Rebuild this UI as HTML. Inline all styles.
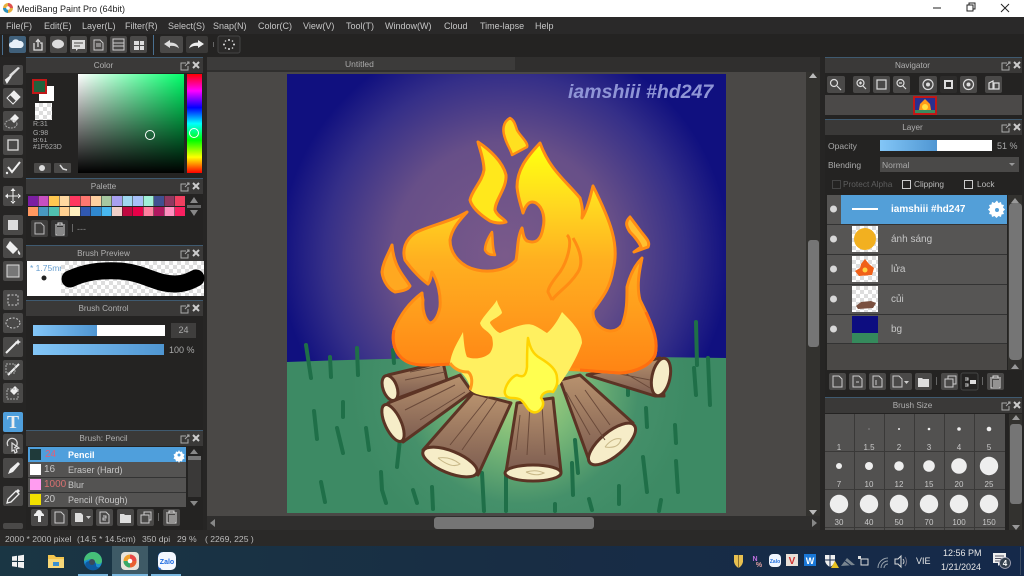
<!DOCTYPE html>
<html><head><meta charset="utf-8"><title>MediBang Paint Pro</title>
<style>
html,body{margin:0;padding:0;background:#262524;}
#r{position:relative;width:1024px;height:576px;overflow:hidden;background:#262524;font-family:"Liberation Sans","Noto Sans CJK JP",sans-serif;font-size:9px;color:#c6c6c6;filter:blur(.35px);}
.b{position:absolute;}
.t{position:absolute;white-space:nowrap;line-height:12px;}
.h{position:absolute;height:15px;background:#3a3938;border-top:1px solid #3f5a70;text-align:center;line-height:15px;font-size:8.2px;color:#b0b0b0;box-sizing:content-box;}
.l{padding-right:22px;width:155px;left:26px;}
.rp{padding-right:22px;width:175px;left:825px;}
.ck{background-color:#fff;background-image:linear-gradient(45deg,#ddd 25%,transparent 25%,transparent 75%,#ddd 75%),linear-gradient(45deg,#ddd 25%,transparent 25%,transparent 75%,#ddd 75%);background-size:8px 8px;background-position:0 0,4px 4px;}
svg{position:absolute;left:0;top:0;}
</style></head><body><div id="r">

<div class="b" style="left:0;top:0;width:1024px;height:17px;background:#fff"></div>
<div class="t" style="left:17px;top:3px;color:#222;font-size:9px">MediBang Paint Pro (64bit)</div>

<div class="b" style="left:0;top:17px;width:1024px;height:17px;background:#2a2929"></div>
<div class="t" style="left:6px;top:20px">File(F)</div><div class="t" style="left:44px;top:20px">Edit(E)</div><div class="t" style="left:82px;top:20px">Layer(L)</div><div class="t" style="left:125px;top:20px">Filter(R)</div><div class="t" style="left:168px;top:20px">Select(S)</div><div class="t" style="left:213px;top:20px">Snap(N)</div><div class="t" style="left:258px;top:20px">Color(C)</div><div class="t" style="left:303px;top:20px">View(V)</div><div class="t" style="left:346px;top:20px">Tool(T)</div><div class="t" style="left:385px;top:20px">Window(W)</div><div class="t" style="left:444px;top:20px">Cloud</div><div class="t" style="left:480px;top:20px">Time-lapse</div><div class="t" style="left:535px;top:20px">Help</div>

<div class="b" style="left:0;top:34px;width:1024px;height:23px;background:#242322"></div>

<!-- centre -->
<div class="b" style="left:207px;top:57px;width:613px;height:16px;background:#302f2e"></div>
<div class="b" style="left:207px;top:57px;width:308px;height:13px;background:#3c3b3a"></div>
<div class="t" style="left:345px;top:58px;font-size:8.500px;color:#aaa">Untitled</div>
<div class="b" style="left:207px;top:72px;width:599px;height:444px;background:#4a4846"></div>
<div class="b" style="left:806px;top:72px;width:14px;height:444px;background:#33322f"></div>
<div class="b" style="left:808px;top:240px;width:11px;height:107px;background:#757575;border-radius:3px"></div>
<div class="b" style="left:207px;top:516px;width:613px;height:14px;background:#2f2e2d"></div>
<div class="b" style="left:434px;top:517px;width:160px;height:12px;background:#757575;border-radius:3px"></div>

<!-- panel columns -->
<div class="b" style="left:26px;top:57px;width:177px;height:473px;background:#242322"></div>
<div class="h l" style="top:57px">Color</div>
<div class="b" style="left:78px;top:74px;width:106px;height:99px;background:linear-gradient(to top,#000,rgba(0,0,0,0)),linear-gradient(to right,#fff,#00ff6a)"></div>
<div class="b" style="left:187px;top:74px;width:15px;height:99px;background:linear-gradient(to bottom,#f00,#f0f 17%,#00f 34%,#0ff 50%,#0f0 67%,#ff0 84%,#f00)"></div>
<div class="b" style="left:39px;top:86px;width:15px;height:15px;background:#fff"></div>
<div class="b" style="left:32px;top:79px;width:11px;height:11px;background:#1f623d;border:2px solid #c01818"></div>
<div class="b ck" style="left:35px;top:103px;width:17px;height:17px"></div>
<div class="t" style="left:33px;top:120px;font-size:7px;line-height:9px;color:#aaa">R:31<br>G:98<br><span style="display:block;height:5px;overflow:hidden;line-height:5px">B:61</span>#1F623D</div>

<div class="h l" style="top:178px">Palette</div>
<div class="h l" style="top:245px">Brush Preview</div>
<div class="b" style="left:27px;top:261px;width:34px;height:35px;background:#fff"></div>
<div class="b ck" style="left:61px;top:261px;width:143px;height:35px"></div>
<div class="t" style="left:30px;top:262px;font-size:8.500px;color:#6aa0d0;width:31px;overflow:hidden">* 1.75mm</div>
<div class="h l" style="top:300px">Brush Control</div>
<div class="b" style="left:33px;top:325px;width:132px;height:11px;background:#fff"></div>
<div class="b" style="left:33px;top:325px;width:64px;height:11px;background:linear-gradient(to right,#83c6f7,#4f96d2)"></div>
<div class="b" style="left:171px;top:323px;width:25px;height:15px;background:#3f3e3d;text-align:center;line-height:15px;color:#aaa;font-size:9px">24</div>
<div class="b" style="left:33px;top:344px;width:131px;height:11px;background:linear-gradient(to right,#83c6f7,#4f96d2)"></div>
<div class="t" style="left:169px;top:344px;font-size:9px;color:#aaa">100 %</div>
<div class="h l" style="top:430px">Brush: Pencil</div>
<div class="b" style="left:28px;top:447px;width:158px;height:60px;background:#545352"></div>
<div class="b" style="left:28px;top:447px;width:158px;height:15px;background:#4f9fdc"></div>
<div class="b" style="left:28px;top:477px;width:158px;height:1px;background:#333"></div>
<div class="b" style="left:28px;top:492px;width:158px;height:1px;background:#333"></div>
<div class="b" style="left:30px;top:449px;width:11px;height:11px;background:#1f3a3a"></div>
<div class="b" style="left:30px;top:464px;width:11px;height:11px;background:#fff"></div>
<div class="b" style="left:30px;top:479px;width:11px;height:11px;background:#ff9cf0"></div>
<div class="b" style="left:30px;top:494px;width:11px;height:11px;background:#f0e000"></div>
<div class="t" style="left:45px;top:449px;color:#e0607a;font-size:10px">24</div><div class="t" style="left:68px;top:449px;color:#fff;font-weight:bold">Pencil</div>
<div class="t" style="left:44px;top:464px;font-size:10px">16</div><div class="t" style="left:68px;top:464px">Eraser (Hard)</div>
<div class="t" style="left:44px;top:479px;color:#d97070;font-size:10px">1000</div><div class="t" style="left:68px;top:479px">Blur</div>
<div class="t" style="left:44px;top:494px;font-size:10px">20</div><div class="t" style="left:68px;top:494px">Pencil (Rough)</div>
<div class="b" style="left:188px;top:457px;width:13px;height:40px;background:#3a3938"></div>
<div class="b" style="left:188px;top:456px;width:13px;height:4px;background:#777"></div>

<div class="b" style="left:825px;top:57px;width:197px;height:473px;background:#242322"></div>
<div class="h rp" style="top:57px">Navigator</div>
<div class="b" style="left:825px;top:95px;width:197px;height:20px;background:#4b4948"></div>
<div class="h rp" style="top:119px">Layer</div>
<div class="t" style="left:828px;top:140px;font-size:8.500px;color:#aaa">Opacity</div>
<div class="b" style="left:880px;top:140px;width:112px;height:11px;background:#fff"></div>
<div class="b" style="left:880px;top:140px;width:57px;height:11px;background:linear-gradient(to right,#83c6f7,#4f96d2)"></div>
<div class="t" style="left:997px;top:140px;font-size:9px;color:#aaa">51 %</div>
<div class="t" style="left:828px;top:159px;font-size:8.500px;color:#aaa">Blending</div>
<div class="b" style="left:880px;top:157px;width:139px;height:15px;background:#4a4948"></div>
<div class="t" style="left:882px;top:159px;font-size:8.500px;color:#aaa">Normal</div>
<div class="t" style="left:843px;top:178px;font-size:8.300px;color:#5e5e5e">Protect Alpha</div>
<div class="t" style="left:914px;top:178px;font-size:8.300px;color:#bbb">Clipping</div>
<div class="t" style="left:977px;top:178px;font-size:8.300px;color:#bbb">Lock</div>
<div class="b" style="left:827px;top:195px;width:180px;height:175px;background:#4a4846"></div>
<div class="b" style="left:827px;top:195px;width:180px;height:149px;background:#565554"></div>
<div class="b" style="left:841px;top:195px;width:166px;height:29px;background:#539fd8"></div>
<div class="b" style="left:827px;top:224px;width:180px;height:1px;background:#333"></div>
<div class="b" style="left:827px;top:254px;width:180px;height:1px;background:#333"></div>
<div class="b" style="left:827px;top:284px;width:180px;height:1px;background:#333"></div>
<div class="b" style="left:827px;top:314px;width:180px;height:1px;background:#333"></div>
<div class="b" style="left:827px;top:343px;width:180px;height:1px;background:#333"></div>
<div class="t" style="left:891px;top:204px;color:#fff;font-weight:bold;font-size:10px">iamshiii #hd247</div>
<div class="t" style="left:891px;top:234px;font-size:10px">ánh sáng</div>
<div class="t" style="left:891px;top:264px;font-size:10px">lửa</div>
<div class="t" style="left:891px;top:294px;font-size:10px">củi</div>
<div class="t" style="left:891px;top:324px;font-size:10px">bg</div>
<div class="b ck" style="left:852px;top:226px;width:26px;height:26px"></div>
<div class="b ck" style="left:852px;top:256px;width:26px;height:26px"></div>
<div class="b ck" style="left:852px;top:286px;width:26px;height:26px"></div>
<div class="b" style="left:852px;top:316px;width:26px;height:17px;background:#0d0d80"></div>
<div class="b" style="left:852px;top:333px;width:26px;height:10px;background:#358a5c"></div>
<div class="b" style="left:1008px;top:195px;width:14px;height:175px;background:#33322f"></div>
<div class="b" style="left:1009px;top:203px;width:13px;height:157px;background:#757575;border-radius:4px"></div>
<div class="h rp" style="top:397px">Brush Size</div>
<div class="b" style="left:825px;top:414px;width:180px;height:116px;background:#525150"></div>
<div class="b" style="left:1009px;top:414px;width:13px;height:116px;background:#33322f"></div>
<div class="b" style="left:1010px;top:424px;width:12px;height:80px;background:#757575;border-radius:3px"></div>
<div class="b" style="left:825px;top:451px;width:180px;height:1px;background:#3a3938"></div>
<div class="b" style="left:825px;top:489px;width:180px;height:1px;background:#3a3938"></div>
<div class="b" style="left:825px;top:527px;width:180px;height:1px;background:#3a3938"></div>
<div class="b" style="left:854px;top:414px;width:1px;height:116px;background:#3a3938"></div>
<div class="b" style="left:884px;top:414px;width:1px;height:116px;background:#3a3938"></div>
<div class="b" style="left:914px;top:414px;width:1px;height:116px;background:#3a3938"></div>
<div class="b" style="left:944px;top:414px;width:1px;height:116px;background:#3a3938"></div>
<div class="b" style="left:974px;top:414px;width:1px;height:116px;background:#3a3938"></div>

<!-- status / taskbar -->
<div class="b" style="left:0;top:530px;width:1024px;height:16px;background:#2a2928"></div>
<div class="t" style="left:5px;top:533px;color:#bbb;font-size:8.600px">2000 * 2000 pixel</div>
<div class="t" style="left:77px;top:533px;color:#bbb;font-size:8.600px">(14.5 * 14.5cm)</div>
<div class="t" style="left:142px;top:533px;color:#bbb;font-size:8.600px">350 dpi</div>
<div class="t" style="left:177px;top:533px;color:#bbb;font-size:8.600px">29 %</div>
<div class="t" style="left:205px;top:533px;color:#bbb;font-size:8.600px">( 2269, 225 )</div>
<div class="b" style="left:0;top:546px;width:1024px;height:30px;background:linear-gradient(to right,#1a3644,#182d44 50%,#15294a)"></div>
<div class="b" style="left:112px;top:546px;width:36px;height:30px;background:#3e5a66"></div>
<div class="b" style="left:78px;top:574px;width:30px;height:2px;background:#7ab8e0"></div>
<div class="b" style="left:112px;top:574px;width:36px;height:2px;background:#7ab8e0"></div>
<div class="b" style="left:151px;top:574px;width:30px;height:2px;background:#7ab8e0"></div>
<div class="t" style="left:916px;top:555px;color:#e6e6e6;font-size:9px">VIE</div>
<div class="t" style="left:943px;top:547px;color:#e6e6e6;font-size:9px">12:56 PM</div>
<div class="t" style="left:941px;top:561px;color:#e6e6e6;font-size:9px">1/21/2024</div>

<!-- artwork + icons overlay -->
<svg width="1024" height="576" viewBox="0 0 1024 576">
<defs>
<radialGradient id="sky" gradientUnits="userSpaceOnUse" cx="505" cy="255" r="225"><stop offset="0" stop-color="#7a5a8a"/><stop offset=".5" stop-color="#674f88"/><stop offset=".8" stop-color="#352f88"/><stop offset="1" stop-color="#10107f"/></radialGradient>
<radialGradient id="gr" gradientUnits="userSpaceOnUse" cx="520" cy="385" r="170"><stop offset="0" stop-color="#b8d880"/><stop offset=".35" stop-color="#7cba78"/><stop offset=".7" stop-color="#45906a"/><stop offset="1" stop-color="#3d8a64"/></radialGradient>
<linearGradient id="fl" gradientUnits="userSpaceOnUse" x1="0" y1="150" x2="0" y2="370"><stop offset="0" stop-color="#ffff10"/><stop offset=".25" stop-color="#ffd820"/><stop offset=".5" stop-color="#ffb020"/><stop offset=".75" stop-color="#ff9c1c"/><stop offset="1" stop-color="#ff8514"/></linearGradient>
<linearGradient id="lg" x1="0" y1="0" x2="0" y2="1"><stop offset="0" stop-color="#b8926e"/><stop offset="1" stop-color="#7c5c50"/></linearGradient>
<g id="x"><path d="M0 0l6 6M6 0l-6 6" stroke="#ccc" stroke-width="2"/></g>
<g id="f"><path d="M5 2H0v7h7V5M4 5l4-4M6 1h2v2" stroke="#aaa" fill="none"/></g>
</defs>

<!-- canvas -->
<rect x="287" y="74" width="439" height="439" fill="url(#sky)"/>
<path d="M287 362Q500 354 726 358V513H287Z" fill="url(#gr)"/>
<g stroke="#1f6f48" stroke-width="4" stroke-linecap="round" fill="none">
<path d="M306 345L311 378M330 357L331 377M357 348L358 375M343 402V417M314 411L317 439M337 428L343 453M366 428L369 450M381 472L382 490L386 503M321 482L325 502M401 430L397 467M413 490L417 503M432 487L433 509M482 473L484 511M506 473V511M555 504V511M572 463L573 495M575 440L578 473M589 499L592 510M619 486V504M643 457L647 492M646 408L647 427M675 425L676 443M676 461L678 492M661 500L659 511M628 389V395M393 350L394 363M696 322L697 365M708 358L710 405M694 368L696 395"/>
</g>
<!-- back logs -->
<g stroke="#5c3425" stroke-width="3" stroke-linejoin="round">
<path d="M587 375L660 358L664 396L655 396Z" fill="url(#lg)"/>
<ellipse cx="661" cy="377" rx="9" ry="19" transform="rotate(12 661 377)" fill="#f6edc8"/>
<path d="M443 362L388 375L398 398L447 380Z" fill="url(#lg)"/>
<ellipse cx="390" cy="388" rx="7" ry="13" transform="rotate(-20 390 388)" fill="#f6edc8"/>
<path d="M460 375L388 403L403 442L472 392Z" fill="url(#lg)"/>
<ellipse cx="393" cy="423" rx="8" ry="20" transform="rotate(-25 393 423)" fill="#f6edc8"/>
<path d="M473 393L511 403L478 475L423 450Z" fill="url(#lg)"/>
<ellipse cx="450" cy="462" rx="29" ry="11" transform="rotate(22 450 462)" fill="#f6edc8"/>
<path d="M517 403L553 398L561 472L506 472Z" fill="url(#lg)"/>
<ellipse cx="533" cy="473" rx="28" ry="8" fill="#f6edc8"/>
<path d="M560 380L580 375L633 423L590 463Z" fill="url(#lg)"/>
<ellipse cx="612" cy="444" rx="29" ry="12" transform="rotate(-40 612 444)" fill="#f6edc8"/>
</g>
<g stroke="#6a4a3a" stroke-width="1" fill="none">
<path d="M410 372L440 366M405 380L445 372M405 410L455 385M420 420L465 392M450 445L490 395M462 450L497 400M530 405L527 455M542 405L545 455M520 415L516 450M575 395L605 440M585 390L610 425M566 392L590 435M610 372L650 380M625 373L650 388"/>
<path d="M438 458q12-2 22 6q-8 5-22-6M526 472q10-3 18 1q-8 4-18-1M605 447q8-10 16-8q-2 10-16 8" stroke="#c8b888"/>
</g>
<!-- flame -->
<g stroke="#ff8c14" stroke-width="3" stroke-linejoin="round">
<path d="M540 143C526 158 517 170 517 187C518 198 521 205 523 213C526 204 530 200 536 203C544 208 545 220 543 228C541 240 536 244 527 241C523 238 523 232 522 228C517 238 518 250 516 260C508 270 490 273 477 270C462 267 450 255 450 240C452 228 460 220 467 212C450 222 428 226 415 233C405 240 402 250 405 260C412 270 422 280 428 284C431 280 431 275 432 272C438 282 441 295 440 307C438 318 433 323 430 323C425 320 422 310 423 300C422 296 422 293 422 293C410 302 400 315 394 330C391 345 397 358 410 363C420 366 430 365 450 364L580 370L620 373C635 372 650 366 655 355C659 340 650 320 640 300C636 285 640 268 642 258C635 265 630 275 627 287C627 300 627 312 622 325C615 334 605 332 598 325C592 318 592 310 595 308C600 300 610 290 613 270C620 245 610 220 593 186C590 198 587 210 582 218C583 210 582 205 580 198C565 180 550 170 540 143Z" fill="url(#fl)"/>
<path d="M510 118C503 122 502 130 505 138C507 145 511 150 512 155L527 147C529 143 520 136 517 130C515 124 514 120 510 118Z" fill="#ffe020" stroke-width="2.500"/>
<path d="M478 142C490 150 503 162 506 175C507 188 495 200 495 210C497 216 503 218 506 222C500 224 495 223 490 221C482 216 472 208 470 200C472 190 482 182 484 170C484 160 480 150 478 142Z" fill="#ffe81c"/>
<path d="M492 232C488 238 485 244 485 250C487 254 490 255 495 255C492 248 493 240 492 232Z" fill="#ffb020" stroke-width="2.500"/>
<path d="M392 245C388 255 383 262 382 272C383 282 390 290 395 292C402 291 408 290 410 286C404 276 394 268 392 245Z" fill="#ffa820"/>
<path d="M630 217C625 222 626 226 630 232C636 238 640 244 641 247L634 252L648 247C650 243 648 240 642 233Z" fill="#ffc030"/>
<path d="M567 235C573 240 568 260 560 272C552 282 548 288 548 292L552 300M573 238C580 250 584 262 578 272C570 285 558 292 552 300" fill="none"/>
</g>
<path d="M394 330C391 345 397 358 410 363C420 366 430 365 450 364M580 370L620 373C635 372 650 366 655 355C659 340 652 326 646 312" fill="none" stroke="#ff6e10" stroke-width="3"/>
<!-- inner yellow -->
<path d="M497 300C497 304 502 310 502 313C498 318 490 320 490 323C493 328 497 332 500 333C512 328 525 322 533 325C540 328 545 332 547 333C553 328 558 320 562 312C572 322 582 332 582 343C578 355 572 365 568 372L560 384C540 395 520 398 503 397C485 397 475 395 470 390C470 380 462 372 450 363C452 350 458 342 463 332C464 345 465 352 467 357C475 360 485 358 490 353C494 347 493 342 492 337C488 330 482 330 480 323C484 315 492 308 497 300Z" fill="#fff060"/>
<path d="M450 363C455 370 462 372 468 372C472 375 473 382 470 390" fill="none" stroke="#ff9a1c" stroke-width="3"/>
<path d="M528 338C530 348 533 354 540 358C550 364 557 370 557 378C558 384 556 388 553 392C548 390 542 393 541 398C544 402 544 406 540 410C536 414 530 413 526 406C522 400 520 398 512 398C506 398 504 394 505 390C507 382 513 376 517 375C523 378 526 376 527 367C527 355 527 348 528 338Z" fill="#ffff50" stroke="#ffd400" stroke-width="2.500" stroke-linejoin="round"/>
<text x="568" y="98" font-family="Liberation Sans" font-weight="bold" font-style="italic" font-size="19.500" fill="#8f95d6">iamshiii #hd247</text>

<!-- toolbar -->
<g fill="#4a4948">
<rect x="29" y="36" width="17" height="17" rx="2"/><rect x="50" y="36" width="17" height="17" rx="2"/><rect x="70" y="36" width="17" height="17" rx="2"/><rect x="90" y="36" width="17" height="17" rx="2"/><rect x="110" y="36" width="17" height="17" rx="2"/><rect x="130" y="36" width="17" height="17" rx="2"/><rect x="160" y="36" width="23" height="17" rx="2"/>
<rect x="186" y="36" width="22" height="17" rx="2" fill="#3a3938"/></g>
<rect x="9" y="36" width="17" height="17" rx="2" fill="#40607a"/>
<rect x="218" y="36" width="22" height="17" rx="2" fill="#2a2928" stroke="#444"/>
<rect x="2" y="35" width="1" height="20" fill="#4a7090"/><rect x="153" y="35" width="1" height="20" fill="#4a7090"/><rect x="213" y="42" width="1" height="5" fill="#666"/>
<path d="M12 48a3 3 0 0 1 0-6a4 4 0 0 1 7-1a3.500 3.500 0 0 1 2 7Z" fill="#e8f0f8"/>
<path d="M34 43v7h8v-7h-2M38 47v-7M36 42l2-2.500l2 2.500" fill="none" stroke="#ddd" stroke-width="1.300"/>
<ellipse cx="58" cy="44" rx="6" ry="4.500" fill="#ddd"/>
<path d="M72 40h13v9h-7l-2 2v-2h-4Z" fill="#ddd"/><path d="M74 43h9M74 46h6" stroke="#4a4948"/>
<path d="M94 40h6l3 3v7h-9Z" fill="none" stroke="#ccc"/><path d="M96 44h5M96 46h5" stroke="#ccc"/>
<rect x="113" y="39" width="11" height="11" fill="none" stroke="#ccc"/><path d="M113 43h11M113 46h11" stroke="#ccc"/>
<path d="M134 41h5v4h-5ZM140 41h4v4h-4ZM134 46h5v4h-5ZM140 46h4v4h-4Z" fill="#ddd"/>
<path d="M164 44l6-4v2.500c5 0 8 2 9 6c-2-2-5-3-9-2.500V48Z" fill="#ddd"/>
<path d="M204 44l-6-4v2.500c-5 0-8 2-9 6c2-2 5-3 9-2.500V48Z" fill="#eee"/>
<g fill="#ddd"><circle cx="229" cy="40" r="1"/><circle cx="229" cy="49" r="1"/><circle cx="224" cy="44.500" r="1"/><circle cx="234" cy="44.500" r="1"/><circle cx="225.500" cy="41" r=".8"/><circle cx="232.500" cy="41" r=".8"/><circle cx="225.500" cy="48" r=".8"/><circle cx="232.500" cy="48" r=".8"/></g>

<!-- tool column -->
<g fill="#4a4948">
<rect x="3" y="65" width="20" height="20" rx="2"/><rect x="3" y="88" width="20" height="20" rx="2"/><rect x="3" y="111" width="20" height="20" rx="2"/><rect x="3" y="135" width="20" height="20" rx="2"/><rect x="3" y="158" width="20" height="20" rx="2"/><rect x="3" y="186" width="20" height="20" rx="2"/><rect x="3" y="215" width="20" height="20" rx="2"/><rect x="3" y="238" width="20" height="20" rx="2"/><rect x="3" y="261" width="20" height="20" rx="2"/><rect x="3" y="290" width="20" height="20" rx="2"/><rect x="3" y="313" width="20" height="20" rx="2"/><rect x="3" y="337" width="20" height="20" rx="2"/><rect x="3" y="360" width="20" height="20" rx="2"/><rect x="3" y="383" width="20" height="20" rx="2"/><rect x="3" y="434" width="20" height="20" rx="2"/><rect x="3" y="458" width="20" height="20" rx="2"/><rect x="3" y="486" width="20" height="20" rx="2"/><rect x="3" y="523" width="20" height="6" rx="2"/>
</g>
<rect x="3" y="412" width="20" height="20" rx="2" fill="#4f9fdc"/>
<path d="M20 68L11 77L9 75L18 67Z" fill="#ddd"/><path d="M11 76L7 82L6 80Z" fill="#eee" stroke="#eee" stroke-width="2"/>
<path d="M14 91l6 6l-7 7l-6-6Z" fill="#eee"/><path d="M10 95l6 6l-3 3l-6-6Z" fill="#4a4948"/><path d="M14 91l6 6l-7 7l-6-6Z" fill="none" stroke="#eee"/>
<path d="M15 114l4 4l-5 5l-4-4Z" fill="#eee"/><ellipse cx="11" cy="124" rx="6" ry="4" fill="none" stroke="#aaa" stroke-dasharray="2 1"/>
<rect x="8" y="140" width="10" height="10" fill="none" stroke="#ddd" stroke-width="1.300"/>
<path d="M20 162L12 172L8 167" fill="none" stroke="#eee" stroke-width="2"/><circle cx="7" cy="173" r="1.200" fill="#eee"/>
<path d="M13 188l2.500 3h-5ZM13 204l2.500-3h-5ZM5 196l3-2.500v5ZM21 196l-3-2.500v5ZM7 195.500h12v1H7ZM12.500 190h1v12h-1Z" fill="#eee"/>
<rect x="8" y="220" width="10" height="10" fill="#ddd"/>
<path d="M10 241l8 8l-5 5l-7-7ZM18 250q3 3 2 5q-3-1-2-5" fill="#eee"/>
<rect x="7" y="265" width="12" height="12" fill="#777" stroke="#ddd"/>
<rect x="8" y="295" width="10" height="10" fill="none" stroke="#ccc" stroke-dasharray="2 1.500"/>
<ellipse cx="13" cy="323" rx="7" ry="5" fill="none" stroke="#ccc" stroke-dasharray="2 1.500"/>
<path d="M6 353L17 342" stroke="#eee" stroke-width="2"/><path d="M18 339l1 2l2 1l-2 1l-1 2l-1-2l-2-1l2-1Z" fill="#eee"/>
<path d="M8 375L19 364" stroke="#eee" stroke-width="2"/><rect x="6" y="364" width="9" height="9" fill="none" stroke="#aaa" stroke-dasharray="2 1"/>
<path d="M15 386l4 4l-5 5l-4-4Z" fill="#eee"/><rect x="7" y="389" width="11" height="10" fill="none" stroke="#aaa" stroke-dasharray="2 1"/>
<text x="13" y="428" text-anchor="middle" font-family="Liberation Serif" font-weight="bold" font-size="18" fill="#eee">T</text>
<path d="M8 446a5 5 0 1 1 6 2M12 443l7 5l-3 1l1 3l-2 1l-1-3l-2 1Z" fill="none" stroke="#ddd" stroke-width="1.200"/>
<path d="M8 474l2-5l8-7l2 2l-7 8Z" fill="#eee"/>
<path d="M7 503l1-4l8-8l3 3l-8 8Z" fill="none" stroke="#eee" stroke-width="1.300"/><path d="M16 491l2-2l2 2l-2 2Z" fill="#eee"/>

<!-- colour panel bits -->
<circle cx="150" cy="135" r="4.500" fill="none" stroke="#fff" stroke-width="1"/>
<circle cx="194" cy="133" r="4.500" fill="none" stroke="#fff" stroke-width="1"/>
<rect x="34" y="163" width="17" height="10" rx="1" fill="#4a4948"/><rect x="54" y="163" width="17" height="10" rx="1" fill="#4a4948"/>
<circle cx="42" cy="168" r="3" fill="#ddd"/><path d="M60 165l3 4l4 1" stroke="#ddd" stroke-width="1.500" fill="none"/>
<use href="#f" x="181" y="61"/><use href="#x" x="193" y="62"/>
<use href="#f" x="181" y="182"/><use href="#x" x="193" y="183"/>
<use href="#f" x="181" y="249"/><use href="#x" x="193" y="250"/>
<use href="#f" x="181" y="304"/><use href="#x" x="193" y="305"/>
<use href="#f" x="181" y="434"/><use href="#x" x="193" y="435"/>
<use href="#f" x="1002" y="61"/><use href="#x" x="1014" y="62"/>
<use href="#f" x="1002" y="123"/><use href="#x" x="1014" y="124"/>
<use href="#f" x="1002" y="401"/><use href="#x" x="1014" y="402"/>

<!-- palette -->
<g>
<rect x="28" y="196" width="10" height="10" fill="#7b1fa2"/><rect x="38.500" y="196" width="10" height="10" fill="#c850c0"/><rect x="49" y="196" width="10" height="10" fill="#ffc850"/><rect x="59.500" y="196" width="10" height="10" fill="#ffd8a0"/><rect x="70" y="196" width="10" height="10" fill="#ff3860"/><rect x="80.500" y="196" width="10" height="10" fill="#ff7870"/><rect x="91" y="196" width="10" height="10" fill="#ffd0a0"/><rect x="101.500" y="196" width="10" height="10" fill="#a8c8a0"/><rect x="112" y="196" width="10" height="10" fill="#a8a0f0"/><rect x="122.500" y="196" width="10" height="10" fill="#a0d8f0"/><rect x="133" y="196" width="10" height="10" fill="#a8c0f8"/><rect x="143.500" y="196" width="10" height="10" fill="#a0f0d8"/><rect x="154" y="196" width="10" height="10" fill="#405090"/><rect x="164.500" y="196" width="10" height="10" fill="#903860"/><rect x="175" y="196" width="10" height="10" fill="#f04060"/>
<rect x="28" y="207" width="10" height="9" fill="#ff9860"/><rect x="38.500" y="207" width="10" height="9" fill="#4898c0"/><rect x="49" y="207" width="10" height="9" fill="#50c0b0"/><rect x="59.500" y="207" width="10" height="9" fill="#ffd090"/><rect x="70" y="207" width="10" height="9" fill="#fff0c0"/><rect x="80.500" y="207" width="10" height="9" fill="#3058b0"/><rect x="91" y="207" width="10" height="9" fill="#3088d0"/><rect x="101.500" y="207" width="10" height="9" fill="#48b8f0"/><rect x="112" y="207" width="10" height="9" fill="#f0d0c8"/><rect x="122.500" y="207" width="10" height="9" fill="#c00840"/><rect x="133" y="207" width="10" height="9" fill="#e80048"/><rect x="143.500" y="207" width="10" height="9" fill="#ff80a0"/><rect x="154" y="207" width="10" height="9" fill="#b01860"/><rect x="164.500" y="207" width="10" height="9" fill="#ff90c0"/><rect x="175" y="207" width="10" height="9" fill="#f82060"/>
</g>
<path d="M194 197l4 6h-8ZM194 216l4-6h-8Z" fill="#888"/><rect x="187" y="205" width="14" height="3" fill="#666"/>
<rect x="31" y="220" width="17" height="17" rx="2" fill="#3f3e3d"/><rect x="51" y="220" width="17" height="17" rx="2" fill="#333"/>
<path d="M35 223h6l3 3v8h-9Z" fill="none" stroke="#bbb"/>
<path d="M55 225h10M56 226v9h8v-9M58 227v7M60 227v7M62 227v7M58 225v-2h4v2" fill="none" stroke="#ddd"/>
<rect x="72" y="224" width="1" height="8" fill="#666"/><text x="77" y="232" font-size="9" fill="#888" font-family="Liberation Sans">---</text>

<!-- brush preview -->
<circle cx="44" cy="278" r="2.500" fill="#222"/>
<path d="M70 279C85 272 100 270 120 271C145 273 155 284 175 284C185 284 192 280 196 278" fill="none" stroke="#000" stroke-width="17" stroke-linecap="round"/>

<!-- brush list icons -->
<path d="M179 450l1 2l2-.5l.5 2l2 1l-1 2l1 2l-2 1l-.5 2l-2-.5l-1 2l-1-2l-2 .5l-.5-2l-2-1l1-2l-1-2l2-1l.5-2l2 .5Z" fill="#fff"/><circle cx="179" cy="455" r="1.500" fill="#4f9fdc"/>
<path d="M194 449l4 5h-8ZM194 506l4-5h-8Z" fill="#888"/>
<g fill="#4a4948"><rect x="31" y="509" width="17" height="17" rx="2"/><rect x="51" y="509" width="17" height="17" rx="2"/><rect x="71" y="509" width="22" height="17" rx="2"/><rect x="96" y="509" width="17" height="17" rx="2"/><rect x="117" y="509" width="17" height="17" rx="2"/><rect x="137" y="509" width="17" height="17" rx="2"/><rect x="163" y="509" width="17" height="17" rx="2"/></g>
<path d="M34 516a2.500 2.500 0 0 1 2-3a3 3 0 0 1 6 0a2.500 2.500 0 0 1 2 3h-3v6h-3v-6Z" fill="#eee"/>
<path d="M55 512h6l3 3v8h-9Z" fill="none" stroke="#ccc"/>
<path d="M75 513h6l2 2v7h-8Z" fill="#ddd"/><path d="M86 516h5l-2.500 3Z" fill="#ccc"/>
<path d="M100 512h6l3 3v8h-9Z" fill="none" stroke="#ccc"/><path d="M103 516h3v2h-3v2h3" stroke="#ccc" fill="none"/>
<path d="M120 514h4l1 1h6v8h-11Z" fill="#ddd"/>
<path d="M141 515h8v8h-8ZM144 515v-3h7v8h-2" fill="none" stroke="#ccc"/>
<rect x="158" y="513" width="1" height="8" fill="#666"/>
<path d="M166 513h11M167 514v9h9v-9M170 515v7M172 515v7M174 515v7M169 513v-2h5v2" fill="none" stroke="#ddd"/>

<!-- navigator -->
<g fill="#4a4948"><rect x="827" y="76" width="18" height="17" rx="2"/><rect x="853" y="76" width="17" height="17" rx="2"/><rect x="873" y="76" width="17" height="17" rx="2"/><rect x="893" y="76" width="17" height="17" rx="2"/><rect x="919" y="76" width="18" height="17" rx="2"/><rect x="960" y="76" width="17" height="17" rx="2"/><rect x="985" y="76" width="17" height="17" rx="2"/></g>
<rect x="940" y="76" width="17" height="17" rx="2" fill="#2e2d2c"/>
<g fill="none" stroke="#ddd" stroke-width="1.200">
<circle cx="834" cy="83" r="3.500"/><path d="M837 86l4 4M863 86l3 3M903 86l3 3"/><circle cx="860.500" cy="83" r="3.500"/><path d="M859 83h3M860.500 81.500v3"/><rect x="877" y="80" width="9" height="9"/><circle cx="900.500" cy="83" r="3.500"/><path d="M899 83h3"/>
<circle cx="928" cy="84.500" r="5"/><path d="M945 81h7v7h-7Z" stroke-width="2"/><circle cx="968.500" cy="84.500" r="5"/>
<path d="M989 89v-6l4-2v8ZM994 83h5v6h-5Z"/></g>
<circle cx="928" cy="84.500" r="2" fill="#ddd"/><circle cx="968.500" cy="84.500" r="2" fill="#ddd"/>
<g><rect x="913" y="96" width="24" height="19" fill="#c01818"/><rect x="915" y="98" width="20" height="15" fill="#2a2f90"/><rect x="915" y="110" width="20" height="3" fill="#3c8a60"/><path d="M925 99l5 5l1 6h-12l1-6Z" fill="#ff9a18"/><circle cx="925" cy="107" r="3" fill="#ffe040"/></g>

<!-- layer controls -->
<path d="M1009 163h6l-3 3Z" fill="#999"/>
<rect x="832.500" y="180.500" width="8" height="8" fill="none" stroke="#444"/><rect x="902.500" y="180.500" width="8" height="8" fill="none" stroke="#ccc"/><rect x="964.500" y="180.500" width="8" height="8" fill="none" stroke="#ccc"/>
<g fill="#d8d8d8"><circle cx="833.500" cy="209" r="3.500"/><circle cx="833.500" cy="239" r="3.500"/><circle cx="833.500" cy="269" r="3.500"/><circle cx="833.500" cy="299" r="3.500"/><circle cx="833.500" cy="329" r="3.500"/></g>
<rect x="852" y="208" width="26" height="2" fill="#fff"/>
<path d="M997 202l1.500 2.500l2.500-1l.5 2.500l2.500.5l-1 2.500l2 2l-2 2l1 2.500l-2.500.5l-.5 2.500l-2.500-1l-2 2l-2-2l-2.500 1l-.5-2.500l-2.500-.5l1-2.500l-2-2l2-2l-1-2.500l2.500-.5l.5-2.500l2.500 1Z" fill="#fff" transform="translate(0 -1.500)"/><circle cx="997" cy="210" r="2" fill="#539fd8"/>
<circle cx="865" cy="239" r="11" fill="#f2b020"/>
<path d="M865 259l4 5l5 4l-2 7l-13 1l-4-5l5-3l1-4Z" fill="#f06018"/><circle cx="865" cy="270" r="2.500" fill="#ffd040"/>
<path d="M856 306l5-4l10-1l5 2l-3 5l-15 1Z" fill="#7a5040"/>
<path d="M1015 364l4 5h-8Z" fill="#999"/><path d="M1015 198l4 5h-8Z" fill="#999"/>
<g fill="#4a4948"><rect x="829" y="373" width="17" height="17" rx="2"/><rect x="849" y="373" width="17" height="17" rx="2"/><rect x="869" y="373" width="17" height="17" rx="2"/><rect x="890" y="373" width="22" height="17" rx="2"/><rect x="915" y="373" width="17" height="17" rx="2"/><rect x="941" y="373" width="17" height="17" rx="2"/><rect x="987" y="373" width="17" height="17" rx="2"/></g>
<rect x="961" y="373" width="17" height="17" rx="2" fill="#242322" stroke="#444"/>
<g fill="none" stroke="#ccc"><path d="M833 376h6l3 3v8h-9ZM853 376h6l3 3v8h-9ZM873 376h6l3 3v8h-9ZM893 376h6l3 3v8h-9ZM945 379h8v8h-8ZM948 379v-3h8v8h-3"/>
<path d="M856 382h3M876 380v5M965 378h3v2h-3M965 384h3v2h-3"/><path d="M990 378h11M991 379v9h9v-9M994 380v7M996 380v7M998 380v7M993 378v-2h5v2" stroke="#ddd"/></g>
<path d="M918 378h4l1 1h6v8h-11Z" fill="#ddd"/><rect x="970" y="380" width="6" height="4" fill="#ddd"/><path d="M904 381h5l-2.500 3Z" fill="#ccc"/>
<rect x="936" y="377" width="1" height="8" fill="#666"/><rect x="982" y="377" width="1" height="8" fill="#666"/>

<!-- brush size -->
<g fill="#eee">
<circle cx="869" cy="429" r=".6" fill="#aaa"/><circle cx="899" cy="429" r="1"/><circle cx="929" cy="429" r="1.300"/><circle cx="959" cy="429" r="1.800"/><circle cx="989" cy="429" r="2.300"/>
<circle cx="839" cy="466" r="3"/><circle cx="869" cy="466" r="4"/><circle cx="899" cy="466" r="4.800"/><circle cx="929" cy="466" r="5.800"/><circle cx="959" cy="466" r="7.800"/><circle cx="989" cy="466" r="9.200"/>
<circle cx="839" cy="504" r="9.200"/><circle cx="869" cy="504" r="9.200"/><circle cx="899" cy="504" r="9.200"/><circle cx="929" cy="504" r="9.200"/><circle cx="959" cy="504" r="9.200"/><circle cx="989" cy="504" r="9.200"/>
</g>
<g font-family="Liberation Sans" font-size="8" fill="#c8c8c8" text-anchor="middle">
<text x="839" y="450">1</text><text x="869" y="450">1.5</text><text x="899" y="450">2</text><text x="929" y="450">3</text><text x="959" y="450">4</text><text x="989" y="450">5</text>
<text x="839" y="487">7</text><text x="869" y="487">10</text><text x="899" y="487">12</text><text x="929" y="487">15</text><text x="959" y="487">20</text><text x="989" y="487">25</text>
<text x="839" y="525">30</text><text x="869" y="525">40</text><text x="899" y="525">50</text><text x="929" y="525">70</text><text x="959" y="525">100</text><text x="989" y="525">150</text>
</g>
<path d="M1016 415l4 5h-8ZM1016 530l4-5h-8Z" fill="#999"/>

<!-- scroll arrows -->
<path d="M813 73l4 5h-8ZM813 515l4-5h-8Z" fill="#bbb"/>
<path d="M210 523l5-4v8ZM817 523l-5-4v8Z" fill="#888"/>

<!-- window controls -->
<g stroke="#222" fill="none"><path d="M933 8h8"/><rect x="967" y="5" width="6" height="6"/><path d="M969 5V3h6v6h-2"/><path d="M1001 4l8 8M1009 4l-8 8"/></g>
<circle cx="8" cy="8" r="5" fill="#e8b040"/><path d="M8 3a5 5 0 0 1 5 5h-5Z" fill="#e05050"/><path d="M3 8a5 5 0 0 0 5 5v-5Z" fill="#2890c0"/><circle cx="8" cy="8" r="1.800" fill="#fff"/>

<!-- taskbar icons -->
<path d="M12 556.500l5-.7v5h-5ZM18 555.700l6-.9v6.200h-6ZM12 562h5v5l-5-.7ZM18 562h6v6.200l-6-.9Z" fill="#f2f2f2"/>
<path d="M48 555h6l2 2h8v11H48Z" fill="#f4c64e"/><rect x="48" y="559" width="16" height="9" fill="#f8d878"/><rect x="53" y="562" width="6" height="4" fill="#3a90d0"/>
<circle cx="93" cy="561" r="9" fill="#1c8fd0"/><path d="M84 561a9 9 0 0 1 18 0c0 3-4 4-6 2c-1-3-5-5-9-3Z" fill="#46c078"/><path d="M90 561c3-1 6 1 6 4c0 2 2 3 4 2a9 9 0 0 1-14 0c-2-3 0-6 4-6Z" fill="#0f5aa0"/><circle cx="92" cy="562" r="3" fill="#3a4a5a"/>
<rect x="121" y="552" width="18" height="18" rx="4" fill="#e8e4dc"/><circle cx="130" cy="561" r="6.500" fill="#f0a030"/><path d="M130 554.500a6.500 6.500 0 0 1 6.500 6.500h-6.500Z" fill="#e84848"/><path d="M123.500 561a6.500 6.500 0 0 0 6.500 6.500v-6.500Z" fill="#38a868"/><path d="M130 567.500a6.500 6.500 0 0 0 6.500-6.500h-6.500Z" fill="#e86030"/><circle cx="130" cy="561" r="2.300" fill="#fff"/>
<rect x="158" y="552" width="18" height="18" rx="5" fill="#f4f8ff"/><path d="M158 557q0-5 5-5h-2q-4 3-3 10Z" fill="#1a68e0"/><path d="M160 570q-2 0-2-5q0 3 3 3Z" fill="#1a68e0"/><text x="167" y="564" text-anchor="middle" font-size="7" font-weight="bold" fill="#1a68e0" font-family="Liberation Sans">Zalo</text>
<path d="M734 555h9v7q-1 4-4.500 6q-3.500-2-4.500-6Z" fill="#e8c050"/><path d="M738.500 555v13" stroke="#8a7030"/>
<text x="755" y="561" text-anchor="middle" font-size="7" font-weight="bold" fill="#c070e0" font-family="Liberation Sans">N</text><text x="759" y="567" font-size="7" font-weight="bold" text-anchor="middle" fill="#e0a0a0" font-family="Liberation Sans">%</text>
<rect x="769" y="554" width="12" height="13" rx="4" fill="#f0f6ff"/><text x="775" y="563" text-anchor="middle" font-size="5" font-weight="bold" fill="#2070e0" font-family="Liberation Sans">Zalo</text>
<rect x="786" y="554" width="12" height="12" fill="#e8e0d8"/><text x="792" y="564" text-anchor="middle" font-size="10" font-weight="bold" fill="#d03030" font-family="Liberation Sans">V</text>
<rect x="804" y="554" width="12" height="12" fill="#1a78d8"/><text x="810" y="564" text-anchor="middle" font-size="9" font-weight="bold" fill="#fff" font-family="Liberation Sans">W</text>
<path d="M825 555h10v6q-1 4-5 6q-4-2-5-6Z" fill="#f0f0f0"/><path d="M830 555v12M825 560h10" stroke="#16294a"/><path d="M835 561l-4 7h8Z" fill="#e8c020"/>
<path d="M841 566l6-8l8 7Z" fill="#7a8690"/><path d="M841 558l13 10" stroke="#16294a"/>
<rect x="861" y="559" width="7" height="6" fill="none" stroke="#ddd"/><path d="M858 556h3v3h-3Z" fill="#ddd"/>
<path d="M878 568a10 10 0 0 1 10-10M881 568a7 7 0 0 1 7-7M884 568a4 4 0 0 1 4-4" fill="none" stroke="#9aa4ae"/>
<path d="M895 559h3l3-3v11l-3-3h-3Z" fill="none" stroke="#ddd"/><path d="M903 559q2 2.500 0 5" fill="none" stroke="#ccc"/><path d="M905 557q3 4.500 0 9" fill="none" stroke="#778"/>
<path d="M993 553h13v10h-5l-3 3v-3h-5Z" fill="#eee"/><path d="M995 556h9M995 558.500h9M995 561h6" stroke="#556"/>
<circle cx="1005" cy="563" r="5.500" fill="#33404e" stroke="#aab" stroke-width=".8"/><text x="1005" y="566" text-anchor="middle" font-size="8" font-weight="bold" fill="#fff" font-family="Liberation Sans">4</text>
<rect x="1020" y="547" width="1" height="28" fill="#3a4a60"/>
</svg>
</div></body></html>
